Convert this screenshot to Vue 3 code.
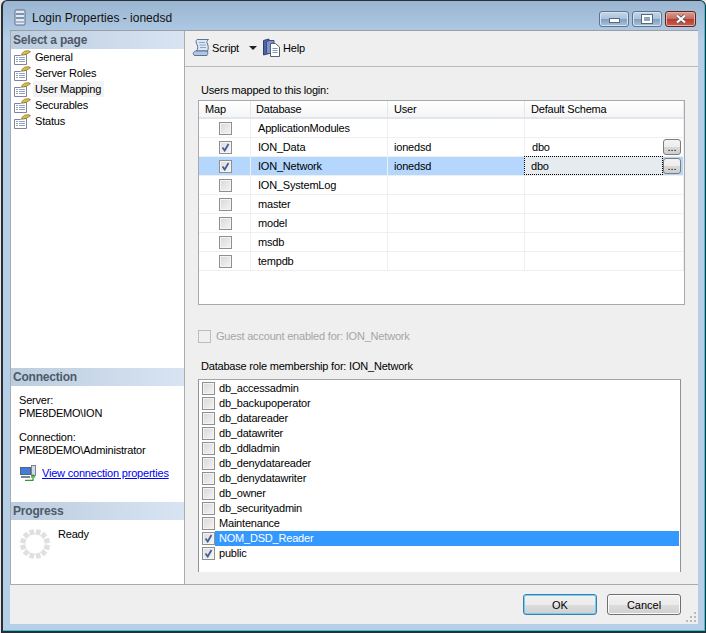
<script setup>
const pages = [
  { name: 'General' },
  { name: 'Server Roles' },
  { name: 'User Mapping', active: true },
  { name: 'Securables' },
  { name: 'Status' },
]
const rows = [
  { db: 'ApplicationModules', user: '', schema: '', on: false },
  { db: 'ION_Data', user: 'ionedsd', schema: 'dbo', on: true, more: true },
  { db: 'ION_Network', user: 'ionedsd', schema: 'dbo', on: true, more: true, sel: true },
  { db: 'ION_SystemLog', user: '', schema: '', on: false },
  { db: 'master', user: '', schema: '', on: false },
  { db: 'model', user: '', schema: '', on: false },
  { db: 'msdb', user: '', schema: '', on: false },
  { db: 'tempdb', user: '', schema: '', on: false },
]
const roles = [
  { name: 'db_accessadmin' },
  { name: 'db_backupoperator' },
  { name: 'db_datareader' },
  { name: 'db_datawriter' },
  { name: 'db_ddladmin' },
  { name: 'db_denydatareader' },
  { name: 'db_denydatawriter' },
  { name: 'db_owner' },
  { name: 'db_securityadmin' },
  { name: 'Maintenance' },
  { name: 'NOM_DSD_Reader', on: true, sel: true },
  { name: 'public', on: true },
]
const spokes = Array.from({ length: 12 }, (_, i) => i * 30 + 15)
const gripDots = [[8, 0], [4, 4], [8, 4], [0, 8], [4, 8], [8, 8]]
</script>

<template>
  <div class="window">
    <header class="title">
      <svg class="appicon" width="14" height="18" viewBox="0 0 14 18">
        <rect x="2" y="1" width="10" height="15" rx="1" fill="#e4e9f2" stroke="#5c6b85" />
        <rect x="3" y="4" width="8" height="2" fill="#7f93b5" />
        <rect x="3" y="8" width="8" height="2" fill="#7f93b5" />
        <rect x="3" y="12" width="8" height="2" fill="#a9b8d0" />
      </svg>
      <span class="titletext">Login Properties - ionedsd</span>
      <div class="caption">
        <button class="capbtn"><i class="minglyph"></i></button>
        <button class="capbtn"><i class="maxglyph"></i></button>
        <button class="capbtn close">
          <svg width="12" height="10" viewBox="0 0 12 10">
            <path d="M2 1.500 L10 8.500 M10 1.500 L2 8.500" stroke="#4a5566" stroke-width="3.600" />
            <path d="M2 1.500 L10 8.500 M10 1.500 L2 8.500" stroke="#fff" stroke-width="2.200" />
          </svg>
        </button>
      </div>
    </header>

    <div class="client">
      <div class="main">
        <aside class="side">
          <div class="sechead">Select a page</div>
          <ul class="pages">
            <li v-for="p in pages" :key="p.name" class="page">
              <svg width="17" height="15" viewBox="0 0 17 15">
                <path d="M.5 5.500 H6.500 L9 4.500 H12.500 V14.500 H.5 Z" fill="#fff" stroke="#7b8698" />
                <path d="M2 7.500h2M5 7.500h6M2 9.500h2M5 9.500h6M2 11.500h2M5 11.500h6" stroke="#8ea2c2" />
                <path d="M7.500 4 L10.500 1.200 L14.500 .7 L16.500 1.700 L12.500 4.200 L9 5.200 Z" fill="#e6bd3a" stroke="#75622a" stroke-width=".7" />
              </svg>
              <span class="pagename" :class="{ active: p.active }">{{ p.name }}</span>
            </li>
          </ul>
          <div class="spacer"></div>
          <div class="sechead">Connection</div>
          <div class="conn">
            <div>Server:</div>
            <div>PME8DEMO\ION</div>
            <div class="connlabel">Connection:</div>
            <div>PME8DEMO\Administrator</div>
            <div class="connlink">
              <svg width="17" height="16" viewBox="0 0 17 16">
                <rect x="1.500" y="2.500" width="10" height="7" fill="#3f7fd8" stroke="#56617a" />
                <rect x="12.500" y="0.500" width="4" height="10" fill="#d5dbe5" stroke="#7b8496" />
                <path d="M2 12h9" stroke="#7b8496" stroke-width="2" />
                <path d="M6 15.500h8V11" fill="none" stroke="#2f9e2f" stroke-width="1.300" />
                <path d="M12 12.500 L14 10 L16 12.500" fill="none" stroke="#2f9e2f" stroke-width="1.100" />
              </svg>
              <a>View connection properties</a>
            </div>
          </div>
          <div class="sechead">Progress</div>
          <div class="prog">
            <svg width="32" height="32" viewBox="0 0 32 32">
              <line
                v-for="a in spokes"
                :key="a"
                x1="16"
                y1="1"
                x2="16"
                y2="6.500"
                stroke="#e0e0e0"
                stroke-width="4.800"
                :transform="`rotate(${a} 16 16)`"
              />
            </svg>
            <span>Ready</span>
          </div>
        </aside>

        <section class="content">
          <div class="toolbar">
            <span class="tool">
              <svg width="18" height="19" viewBox="0 0 18 19">
                <path d="M5 1.500 H16.500 C15 2.500 14.500 4 15.500 6 C16.500 8.500 16.500 11 15.500 13 H4.500 C6 11 6 8.500 5 6.500 C4 4.500 3.500 2.500 5 1.500 Z" fill="#dfe7f2" stroke="#56749e" />
                <path d="M7 4.500h6M7.500 7h6.500M8 9.500h6" stroke="#8ea4c4" />
                <path d="M1.500 14.500 C2.500 13 4 13 4.500 13 H15.500 C16 14.500 16 16 15 17.500 H3 C1.500 17.500 .8 16 1.500 14.500 Z" fill="#b4c5dd" stroke="#56749e" />
              </svg>
              <span class="scriptlabel">Script</span>
              <i class="caret"></i>
            </span>
            <span class="tool helptool">
              <svg width="17" height="19" viewBox="0 0 17 19">
                <path d="M.5 2.500 L6 1 V15.500 L.5 17 Z" fill="#4d65a4" stroke="#323f70" />
                <path d="M6 2.500 H11 V15.500 H3.500 V4 Z" fill="#7e93c8" stroke="#3e4e82" />
                <path d="M7.500 5.500 H12.500 L16.500 9 V18.500 H7.500 Z" fill="#fff" stroke="#555f75" />
                <path d="M9.500 10.500h5M9.500 12.500h5M9.500 14.500h5" stroke="#7f93b5" />
              </svg>
              Help
            </span>
          </div>

          <div class="panel">
            <div class="caption-label first">Users mapped to this login:</div>
            <div class="grid">
              <div class="ghead">
                <span class="c-map">Map</span>
                <span class="c-db">Database</span>
                <span class="c-user">User</span>
                <span class="c-schema">Default Schema</span>
              </div>
              <div v-for="r in rows" :key="r.db" class="grow" :class="{ sel: r.sel }">
                <span class="c-map cellcheck">
                  <span class="check" :class="{ on: r.on }">
                    <svg v-if="r.on" width="11" height="11" viewBox="0 0 11 11"><path d="M2.500 5.500 L4.700 8.500 L8.500 2" fill="none" stroke="#44609c" stroke-width="1.800" /></svg>
                  </span>
                </span>
                <span class="c-db dbname">{{ r.db }}</span>
                <span class="c-user">{{ r.user }}</span>
                <span class="c-schema schema">
                  <span class="schemaval" :class="{ focus: r.sel }">{{ r.schema }}</span>
                  <button v-if="r.more" class="dots">...</button>
                </span>
              </div>
            </div>

            <div class="guest">
              <span class="check dis"></span>
              <span>Guest account enabled for: ION_Network</span>
            </div>

            <div class="caption-label second">Database role membership for: ION_Network</div>
            <div class="rolelist">
              <div v-for="r in roles" :key="r.name" class="role">
                <span class="check" :class="{ on: r.on }">
                  <svg v-if="r.on" width="11" height="11" viewBox="0 0 11 11"><path d="M2.500 5.500 L4.700 8.500 L8.500 2" fill="none" stroke="#44609c" stroke-width="1.800" /></svg>
                </span>
                <span class="rolename" :class="{ sel: r.sel }">{{ r.name }}</span>
              </div>
            </div>
          </div>
        </section>
      </div>

      <footer class="foot">
        <button class="btn default">OK</button>
        <button class="btn">Cancel</button>
        <svg class="grip" width="11" height="11" viewBox="0 0 11 11">
          <rect v-for="d in gripDots" :key="d.join()" :x="d[0]" :y="d[1]" width="2" height="2" fill="#b9b9b9" />
        </svg>
      </footer>
    </div>
  </div>
</template>

<style scoped>
.window {
  width: 705px;
  height: 633px;
  margin-left: 1px;
  box-sizing: border-box;
  border: 1px solid #2b2f33;
  border-left-width: 2px;
  border-bottom-width: 2px;
  border-radius: 6px 6px 0 0;
  background: linear-gradient(#9ab5d1 0, #b5cfe9 40px);
  padding: 0 7px 7px 7px;
  display: flex;
  flex-direction: column;
  font: 11px "Liberation Sans", Arial, sans-serif;
  letter-spacing: -0.2px;
  color: #000;
  box-shadow: inset 0 -1px 0 #2fc6e0, inset -1px 0 0 #2fc6e0;
  overflow: hidden;
}
.title {
  height: 29px;
  display: flex;
  align-items: center;
  flex: none;
}
.appicon { margin: 4px 0 0 3px; }
.titletext { margin: 4px 0 0 5px; font-size: 12px; letter-spacing: 0; color: #111; }
.caption {
  display: flex;
  gap: 3px;
  margin: 0 2px 0 auto;
  align-self: flex-start;
  padding-top: 10px;
}
.capbtn {
  width: 30px;
  height: 16px;
  padding: 0;
  border: 1px solid #5f738d;
  border-radius: 3px;
  background: linear-gradient(#c4d6ea 0, #a9c2dc 50%, #7f9dbd 51%, #a8c3de 100%);
  display: flex;
  align-items: center;
  justify-content: center;
  box-shadow: inset 0 0 0 1px #d5e2f0;
}
.capbtn.close {
  width: 31px;
  border-color: #5b2622;
  background: linear-gradient(#dd9c8e 0, #c56a5c 50%, #b63c2c 51%, #c9604c 100%);
  box-shadow: inset 0 0 0 1px #e7b0a4;
}
.minglyph {
  display: block;
  width: 9px;
  height: 3px;
  margin-top: 3px;
  background: #fff;
  border: 1px solid #58677b;
}
.maxglyph {
  display: block;
  width: 6px;
  height: 4px;
  border: 2px solid #fff;
  outline: 1px solid #58677b;
  background: #8aa6c3;
}
.client {
  flex: 1;
  min-height: 0;
  background: #efefef;
  display: flex;
  flex-direction: column;
  border-top: 1px solid #9b9ea3;
}
.main {
  flex: 1;
  min-height: 0;
  display: flex;
  border-bottom: 1px solid #a9abae;
}
.side {
  width: 175px;
  flex: none;
  box-sizing: border-box;
  background: #fff;
  border-left: 1px solid #a9abae;
  border-right: 1px solid #a9abae;
  display: flex;
  flex-direction: column;
}
.sechead {
  height: 18px;
  line-height: 18px;
  padding-left: 2px;
  font-size: 12px;
  font-weight: 700;
  color: #4e5a68;
  background: linear-gradient(to right, #bccddf, #d8e4f2);
  flex: none;
}
.pages { list-style: none; margin: 0; padding: 0; }
.page {
  height: 16px;
  display: flex;
  align-items: center;
  gap: 2px;
  padding-left: 3px;
}
.pagename { height: 16px; line-height: 16px; padding: 0 2px; white-space: nowrap; }
.pagename.active { background: #f3f3f3; padding-right: 3px; }
.spacer { flex: 1; }
.conn { padding: 8px 0 0 8px; height: 116px; box-sizing: border-box; line-height: 13px; }
.connlabel { margin-top: 11px; }
.connlink { display: flex; align-items: center; gap: 6px; margin-top: 8px; white-space: nowrap; }
.connlink a { color: #0000ee; text-decoration: underline; }
.prog {
  height: 64px;
  display: flex;
  gap: 7px;
  align-items: flex-start;
  padding: 8px 0 0 8px;
  box-sizing: border-box;
}
.content { flex: 1; min-width: 0; display: flex; flex-direction: column; }
.toolbar {
  height: 36px;
  flex: none;
  box-sizing: border-box;
  border-bottom: 1px solid #b9b9b9;
  display: flex;
  align-items: center;
  padding: 0 0 2px 7px;
  gap: 6px;
}
.tool { display: flex; align-items: center; gap: 2px; }
.helptool { gap: 3px; }
.scriptlabel { width: 35px; }
.caret {
  width: 0;
  height: 0;
  border: 4px solid transparent;
  border-top-color: #222;
  border-bottom: 0;
}
.panel {
  flex: 1;
  min-height: 0;
  padding: 0 0 0 13px;
  display: flex;
  flex-direction: column;
  align-items: flex-start;
}
.caption-label { height: 14px; line-height: 14px; }
.first { margin: 16px 0 3px 3px; }
.second { margin: 16px 0 6px 3px; }
.grid {
  width: 487px;
  height: 205px;
  box-sizing: border-box;
  background: #fff;
  border: 1px solid #a7a9ac;
  flex: none;
}
.ghead, .grow { display: flex; }
.ghead {
  height: 16px;
  line-height: 17px;
  border-bottom: 2px solid #e3e5e8;
  background: linear-gradient(#fff, #f4f5f6);
}
.ghead span { border-right: 1px solid #e4e6e8; box-sizing: border-box; padding-left: 6px; }
.grow {
  height: 19px;
  line-height: 19px;
  box-sizing: border-box;
  border-bottom: 1px solid #efefef;
}
.grow.sel { background: #b5d7fd; }
.grow > span { border-right: 1px solid #efefef; box-sizing: border-box; }
.c-map { width: 52px; }
.c-db { width: 137px; }
.c-user { width: 137px; padding-left: 6px; }
.c-schema { width: 159px; }
.ghead .c-db { padding-left: 5px; }
.cellcheck { display: flex; align-items: center; justify-content: center; padding-left: 1px; }
.dbname { padding-left: 7px; }
.schema { display: flex; position: relative; }
.schemaval { flex: 1; padding-left: 7px; height: 18px; line-height: 19px; margin-right: 23px; }
.schemaval.focus {
  background: #e6ebf0;
  border: 1px dotted #000;
  height: 19px;
  line-height: 19px;
  padding-left: 6px;
  margin: -1px 20px 0 -1px;
  box-sizing: border-box;
}
.dots {
  position: absolute;
  right: 2px;
  top: 1px;
  width: 18px;
  height: 16px;
  padding: 0;
  font: 11px/10px "Liberation Sans", Arial, sans-serif;
  border: 1px solid #7c7c7c;
  border-radius: 3px;
  background: linear-gradient(#f3f3f3 0, #ececec 50%, #d9d9d9 51%, #cfcfcf 100%);
}
.check {
  width: 11px;
  height: 11px;
  flex: none;
  border: 1px solid #8f8f8f;
  background: linear-gradient(135deg, #d8d8d8, #f4f4f4);
  box-shadow: inset 0 0 0 1px #f4f4f4;
  display: flex;
  align-items: center;
  justify-content: center;
}
.check.on { background: linear-gradient(135deg, #dcdcdc, #f6f6f6); }
.check.dis { background: #efefef; border-color: #bcbcbc; box-shadow: none; }
.guest {
  display: flex;
  align-items: center;
  gap: 5px;
  height: 14px;
  margin-top: 24px;
  color: #a5a5a5;
}
.rolelist {
  width: 483px;
  height: 193px;
  flex: none;
  box-sizing: border-box;
  background: #fff;
  border: 1px solid #8f9296;
  border-bottom: 0;
  border-top-color: #a0a3a7;
  padding: 1px 1px 0 3px;
}
.role { height: 15px; display: flex; align-items: center; }
.rolename { flex: 1; height: 15px; line-height: 15px; padding-left: 4px; }
.rolename.sel { background: #3399ff; color: #fff; }
.foot {
  height: 39px;
  flex: none;
  display: flex;
  justify-content: flex-end;
  align-items: flex-start;
  gap: 10px;
  padding: 9px 17px 0 0;
  box-sizing: border-box;
  position: relative;
}
.grip { position: absolute; right: 1px; bottom: 1px; }
.btn {
  width: 74px;
  height: 21px;
  padding: 0;
  font: 11px "Liberation Sans", Arial, sans-serif;
  color: #000;
  border: 1px solid #707070;
  border-radius: 3px;
  background: linear-gradient(#f2f2f2 0, #ebebeb 50%, #dddddd 51%, #cfcfcf 100%);
  box-shadow: inset 0 0 0 1px #fbfbfb;
}
.btn.default { border-color: #3c7fb1; box-shadow: inset 0 0 0 1px #6fd0ee; }
</style>
<style>
html, body { margin: 0; padding: 0; background: #e8e8e8; }
</style>
